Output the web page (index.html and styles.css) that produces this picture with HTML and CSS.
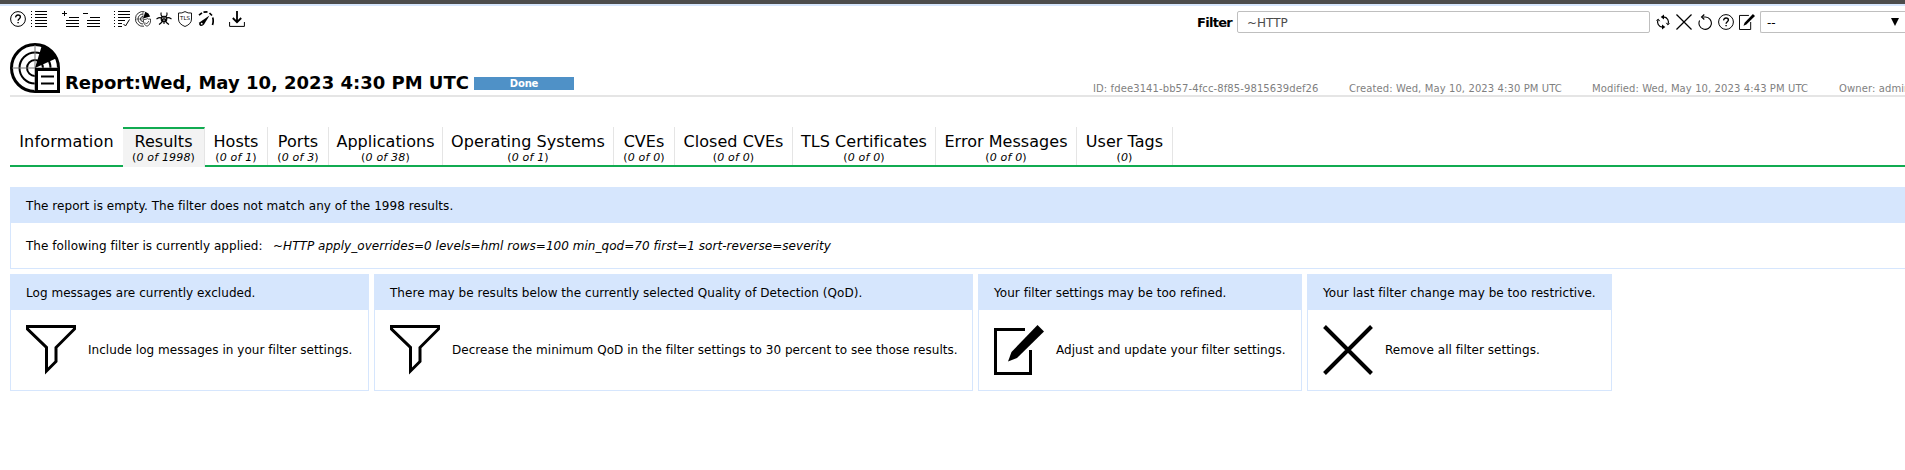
FILE: index.html
```html
<!DOCTYPE html>
<html lang="en"><head><meta charset="utf-8"><title>Report</title><link rel="stylesheet" href="styles.css"></head>
<body>
<svg class="defs" aria-hidden="true">
<symbol id="help" viewBox="0 0 16 16"><circle cx="8" cy="8" r="7.4"/><path d="M5.700 6.400C5.600 4.900 6.600 4 8 4s2.400.9 2.400 2.100C10.400 7.700 8.100 7.800 8.100 9.700M8.100 10.900V12.300" stroke-width="1.400"/></symbol>
<symbol id="list" viewBox="0 0 16 16"><path d="M4 .5H16M4 3.500H16M4 6.500H16M4 9.500H16M4 12.500H16M4 15.500H16"/><path d="M.5 0V16" stroke-dasharray="1 2"/></symbol>
<symbol id="listcheck" viewBox="0 0 16 16"><path d="M4 .5H16M4 3.500H16M4 6.500H16M4 9.500H11M4 12.500H8M4 15.500H8M9.500 13L11.500 15L15.500 8.500"/><path d="M.5 0V16" stroke-dasharray="1 2"/></symbol>
<symbol id="plus" viewBox="0 0 17 16"><path d="M0 2.500H5M2.500 0V5M7 6.500H17M4 9.500H17M4 12.500H17M4 15.500H17"/></symbol>
<symbol id="minus" viewBox="0 0 17 16"><path d="M0 2.500H5M7 6.500H17M4 9.500H17M4 12.500H17M4 15.500H17"/></symbol>
<symbol id="radar" viewBox="0 0 16 16"><path d="M9.500 .7A7.400 7.400 0 1 0 9 15.200M8 3A5 5 0 1 0 8 13M8 5.500A2.500 2.500 0 1 0 8 10.500" stroke-width=".8"/><path d="M8 1V8H1" stroke-width=".5"/><path d="M8 7.500L10.300 .8Q14 2 15.200 5.500Z" fill="#000" stroke="none"/><path d="M8.500 8.500Q12 8.500 12.200 7.500Q13 8.500 15.500 8V11Q15 14 12 15.300Q9 14 8.500 11Z" fill="#fff" stroke-width=".7"/><path d="M10 11.500L11.500 13L14 10" stroke-width=".7"/></symbol>
<symbol id="bio" viewBox="0 0 16 16"><path d="M5.300 1.500A3.300 3.300 0 0 0 8 6.300A3.300 3.300 0 0 0 10.700 1.500M.5 8Q5 5 6.500 8.500Q7 11 3 13.500M15.500 8Q11 5 9.500 8.500Q9 11 13 13.500M8 9V13" stroke-width="1.100"/><circle cx="8" cy="8" r="2.800" stroke-width="1.100"/><circle cx="8" cy="8" r="1" fill="#000" stroke="none"/></symbol>
<symbol id="gauge" viewBox="0 0 16 16"><path d="M1 4.200L4 1.800M5.500 1.200L9.500 .8M11.500 2L14 4.500M14.700 6.500Q15.800 10 14.500 14" stroke-width="1.700"/><path d="M11.500 4.500L6 13.500Q4.500 15.500 2.200 14.800Q.3 13.500 1.700 11.300Z" fill="#000" stroke="none"/><circle cx="3.700" cy="12.700" r=".9" fill="#fff" stroke="none"/></symbol>
<symbol id="download" viewBox="0 0 16 16"><path d="M.6 11V15.400H15.400V11"/><path d="M8 0V11M3.800 7L8 11.200L12.200 7" stroke-width="1.800"/></symbol>
<symbol id="report" viewBox="0 0 50 50"><circle cx="25" cy="25" r="23.500" stroke-width="3"/><circle cx="25" cy="25" r="15.500" stroke-width="2"/><circle cx="25" cy="25" r="8" stroke-width="2"/><path d="M25 2V48M2 25H48" stroke="#777"/><path d="M25 25L32 2Q42 5 47 15Z" fill="#000" stroke="none"/><path d="M26.500 26.500H48.500V48.500H26.500Z" fill="#fff" stroke-width="3"/><path d="M31 33.500H44M31 40.500H44" stroke-width="2"/></symbol>
<symbol id="refresh" viewBox="0 0 16 16"><path d="M8.500 2.800A5.200 5.200 0 0 1 12.800 10.500M7.500 13.200A5.200 5.200 0 0 1 3.200 5.500" stroke-width="1.200"/><path d="M5.700 3L9 .5V5.500ZM10.300 13L7 10.500V15.500Z" fill="#000" stroke="none"/><path d="M11.300 8.800L12.600 10.800L14.600 9.500M4.700 7.200L3.400 5.200L1.400 6.500" stroke-width=".9"/></symbol>
<symbol id="cross" viewBox="0 0 50 50"><path d="M1.500 1.500L48.500 48.500M48.500 1.500L1.500 48.500" stroke-width="4"/></symbol>
<symbol id="reset" viewBox="0 0 16 16"><path d="M5.500 3H8.500A6.200 6.200 0 1 1 2.600 6.500" stroke-width="1.100"/><path d="M7.300 .5L4.600 3L7.300 5.500" stroke-width="1.200"/></symbol>
<symbol id="edit" viewBox="0 0 50 50"><path d="M31 4.500H1.500V48.500H36.500V25" stroke-width="3"/><path d="M43.500 0L50 6.500L23 33L14 36.500L17.500 27Z" fill="#000" stroke="none"/></symbol>
<symbol id="funnel" viewBox="0 0 50 50"><path d="M1.500 1.500H48.500V4L30 22.500V36.500L20.500 46V22.500L1.500 4Z" stroke-width="3"/></symbol>
</svg>
<div class="topbar"></div>
<main class="page">
 <div class="toolbar">
  <div class="icons"><svg><use href="#help"/></svg><svg><use href="#list"/></svg><svg class="wide group"><use href="#plus"/></svg><svg class="wide"><use href="#minus"/></svg><svg class="group2"><use href="#listcheck"/></svg><svg><use href="#radar"/></svg><svg><use href="#bio"/></svg><svg viewBox="0 0 16 16"><path d="M1.500 2Q5 2.500 8 .6Q11 2.500 14.500 2V8Q14.500 13 8 15.500Q1.500 13 1.500 8Z" stroke-width=".9"/><text x="8" y="9" text-anchor="middle" class="tls-text">TLS</text></svg><svg><use href="#gauge"/></svg><svg class="group3"><use href="#download"/></svg></div>
  <div class="filter"><b class="filter-label">Filter</b><div class="input">~HTTP</div><div class="icons filter-icons"><svg><use href="#refresh"/></svg><svg><use href="#cross"/></svg><svg><use href="#reset"/></svg><svg><use href="#help"/></svg><svg><use href="#edit"/></svg></div><div class="select"><span>--</span><span class="arrow"></span></div></div>
 </div>
 <header class="header"><svg class="big"><use href="#report"/></svg><h1>Report:Wed, May 10, 2023 4:30 PM UTC</h1><div class="status">Done</div>
  <div class="meta"><span class="m1">ID: fdee3141-bb57-4fcc-8f85-9815639def26</span><span class="m2">Created: Wed, May 10, 2023 4:30 PM UTC</span><span class="m3">Modified: Wed, May 10, 2023 4:43 PM UTC</span><span class="m4">Owner: admin</span></div></header>
 <nav class="tabs">
  <div class="tab t1"><span>Information</span></div><div class="tab t2 active"><span>Results</span><small>(<i>0 of 1998</i>)</small></div><div class="tab t3"><span>Hosts</span><small>(<i>0 of 1</i>)</small></div><div class="tab t4"><span>Ports</span><small>(<i>0 of 3</i>)</small></div><div class="tab t5"><span>Applications</span><small>(<i>0 of 38</i>)</small></div><div class="tab t6"><span>Operating Systems</span><small>(<i>0 of 1</i>)</small></div><div class="tab t7"><span>CVEs</span><small>(<i>0 of 0</i>)</small></div><div class="tab t8"><span>Closed CVEs</span><small>(<i>0 of 0</i>)</small></div><div class="tab t9"><span>TLS Certificates</span><small>(<i>0 of 0</i>)</small></div><div class="tab t10"><span>Error Messages</span><small>(<i>0 of 0</i>)</small></div><div class="tab t11"><span>User Tags</span><small>(<i>0</i>)</small></div>
 </nav>
 <section class="panel summary"><div class="head">The report is empty. The filter does not match any of the 1998 results.</div><div class="body"><span class="applied">The following filter is currently applied:</span><i class="query">~HTTP apply_overrides=0 levels=hml rows=100 min_qod=70 first=1 sort-reverse=severity</i></div></section>
 <div class="cards">
  <section class="panel c1"><div class="head">Log messages are currently excluded.</div><div class="body"><svg class="big"><use href="#funnel"/></svg><span>Include log messages in your filter settings.</span></div></section>
  <section class="panel c2"><div class="head">There may be results below the currently selected Quality of Detection (QoD).</div><div class="body"><svg class="big"><use href="#funnel"/></svg><span>Decrease the minimum QoD in the filter settings to 30 percent to see those results.</span></div></section>
  <section class="panel c3"><div class="head">Your filter settings may be too refined.</div><div class="body"><svg class="big"><use href="#edit"/></svg><span>Adjust and update your filter settings.</span></div></section>
  <section class="panel c4"><div class="head">Your last filter change may be too restrictive.</div><div class="body"><svg class="big"><use href="#cross"/></svg><span>Remove all filter settings.</span></div></section>
 </div>
</main>
</body></html>
```
FILE: styles.css
```css
* { box-sizing: border-box; }
body { margin: 0; background: #fff; color: #000; font: 12px/18px Verdana, "DejaVu Sans", sans-serif; overflow: hidden; }
.defs { position: absolute; width: 0; height: 0; }
svg { fill: none; stroke: #000; stroke-width: 1; flex: none; }
.topbar { height: 6px; background: #4c4c4c; border-bottom: 2px solid #d6e6fd; }
.page { padding-left: 10px; white-space: nowrap; }
.toolbar { height: 36px; display: flex; justify-content: space-between; padding-top: 5px; }
.icons { display: flex; gap: 5px; }
.icons svg { width: 16px; height: 16px; }
.icons svg.wide { width: 17px; }
.icons .group { margin-left: 10px; }
.icons .wide + .wide { margin-left: -1px; }
.icons .group2 { margin-left: 9px; }
.icons .group3 { margin-left: 10px; }
.tls-text { font: 5.5px "DejaVu Sans", sans-serif; fill: #000; stroke: none; }
.filter { display: flex; width: 708px; flex: none; }
.filter-label { width: 40px; font-size: 13px; line-height: 23px; letter-spacing: -.7px; }
.input { width: 413px; height: 22px; border: 1px solid #bfbfbf; border-radius: 2px; padding-left: 9px; line-height: 22px; color: #4c4c4c; }
.filter-icons { padding: 3px 0 0 5px; width: 110px; }
.select { flex: 1; height: 22px; border: 1px solid #bfbfbf; border-right: 0; border-radius: 2px 0 0 2px; padding: 0 6px; line-height: 22px; display: flex; justify-content: space-between; }
.arrow { border: 4px solid transparent; border-top: 8px solid #000; border-bottom: 0; height: 8px; margin: 6px 0 0; }
.big { width: 50px; height: 50px; }
.header { height: 54px; margin-top: 1px; border-bottom: 2px solid #e5e5e5; display: flex; }
.header > * { flex: none; }
h1 { margin: 28px 0 0 5px; width: 409px; font-size: 18px; line-height: 24px; }
.status { width: 100px; height: 13px; margin-top: 34px; background: #4f91c7; color: #fff; font-size: 10px; line-height: 14px; font-weight: bold; text-align: center; letter-spacing: -.2px; }
.meta { display: flex; margin: 38px 0 0 519px; height: 14px; font-size: 10px; line-height: 16px; color: #7f7f7f; letter-spacing: .1px; }
.m1 { width: 256px; }
.m2 { width: 243px; }
.m3 { width: 247px; }
.tabs { display: flex; height: 40px; margin-top: 30px; border-bottom: 2px solid #11ab51; }
.tab { height: 38px; border-right: 1px solid #e5e5e5; text-align: center; display: flex; flex-direction: column; align-items: center; font-size: 16px; line-height: 20px; padding-top: 5px; letter-spacing: .04px; }
.tab small { font-size: 11px; line-height: 12px; letter-spacing: .18px; }
.active { height: 40px; background: #f3f3f3; border-top: 2px solid #11ab51; padding-top: 3px; }
.t1 { width: 113px; border: 0; letter-spacing: .18px; }
.t2 { width: 82px; }
.t3 { width: 63px; }
.t4 { width: 61px; }
.t5 { width: 114px; }
.t6 { width: 171px; }
.t7 { width: 61px; }
.t8 { width: 118px; }
.t9 { width: 143px; }
.t10 { width: 141px; }
.t11 { width: 96px; }
.panel { border: 1px solid #d6e6fd; letter-spacing: .04px; }
.head { height: 35px; line-height: 36px; background: #d6e6fd; padding-left: 15px; }
.body { display: flex; align-items: center; height: 80px; padding: 0 15px; }
.body .big + span { margin-left: 12px; }
.summary { margin-top: 20px; height: 82px; border-right: 0; }
.summary .head { letter-spacing: .06px; }
.summary .body { height: 45px; }
.applied { width: 247px; }
.cards { display: flex; gap: 5px; margin-top: 5px; }
.cards .panel { height: 117px; }
.c1 { width: 359px; }
.c2 { width: 599px; }
.c3 { width: 324px; }
.c4 { width: 305px; }
```
